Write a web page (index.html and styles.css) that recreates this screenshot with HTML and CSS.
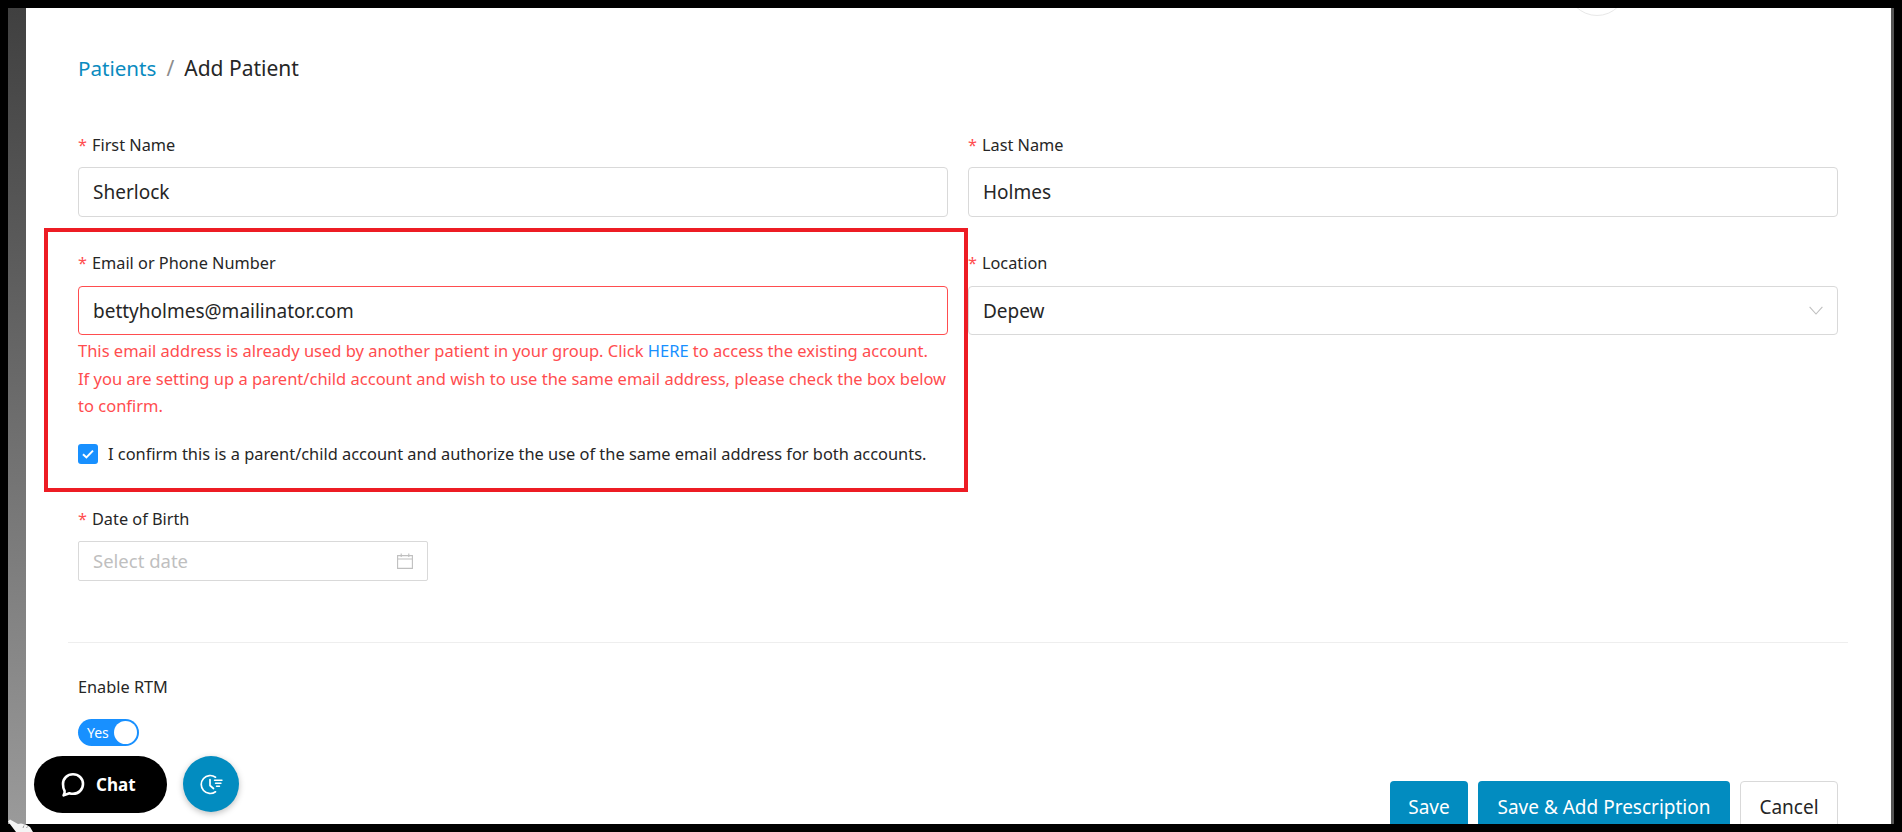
FILE: index.html
```html
<!DOCTYPE html>
<html lang="en">
<head>
<meta charset="utf-8">
<title>Add Patient</title>
<link rel="stylesheet" href="styles.css">
</head>
<body>
<div class="screen">
  <div class="strip-left"></div>
  <main class="page">
    <div class="avatar"></div>
    <nav class="crumbs"><a class="crumb-link">Patients</a><span class="crumb-sep">/</span><span class="crumb-current">Add Patient</span></nav>
    <form class="form-grid">
      <div class="field">
        <div class="label"><span class="star">*</span>First Name</div>
        <div class="input">Sherlock</div>
      </div>
      <div class="field">
        <div class="label"><span class="star">*</span>Last Name</div>
        <div class="input">Holmes</div>
      </div>
      <div class="field field-email">
        <div class="label"><span class="star">*</span>Email or Phone Number</div>
        <div class="input input-error">bettyholmes@mailinator.com</div>
        <div class="error">This email address is already used by another patient in your group. Click <a class="error-link">HERE</a> to access the existing account.<br>If you are setting up a parent/child account and wish to use the same email address, please check the box below to confirm.</div>
        <label class="confirm">
          <span class="checkbox"><svg width="14" height="12" viewBox="0 0 14 12"><path d="M2 6.200 5.400 9.400 12 2.600" fill="none" stroke="#fff" stroke-width="2"/></svg></span>
          <span class="confirm-text">I confirm this is a parent/child account and authorize the use of the same email address for both accounts.</span>
        </label>
        <div class="highlight"></div>
      </div>
      <div class="field field-location">
        <div class="label"><span class="star">*</span>Location</div>
        <div class="input input-select">Depew
          <svg class="chevron" width="14" height="9" viewBox="0 0 14 9"><path d="M.6.8 7 8 13.400.8" fill="none" stroke="#bfbfbf" stroke-width="1.100"/></svg>
        </div>
      </div>
    </form>
    <div class="field field-date">
      <div class="label"><span class="star">*</span>Date of Birth</div>
      <div class="date-input"><span class="placeholder">Select date</span>
        <svg width="16" height="16" viewBox="0 0 16 16"><path d="M.6 2.600h14.800v12.800H.6zM.6 6h14.800M4.200.6v3.400M11.800.6v3.400" fill="none" stroke="#bfbfbf" stroke-width="1.100"/></svg>
      </div>
    </div>
    <hr class="divider">
    <div class="rtm-label">Enable RTM</div>
    <div class="switch"><span class="switch-text">Yes</span><span class="switch-knob"></span></div>
    <div class="actions">
      <button type="button" class="btn btn-primary btn-save">Save</button>
      <button type="button" class="btn btn-primary btn-presc">Save &amp; Add Prescription</button>
      <button type="button" class="btn btn-cancel">Cancel</button>
    </div>
    <div class="chat">
      <svg width="24" height="26" viewBox="0 0 24 26"><path d="M12 2.200c5.600 0 10 4.200 10 9.800s-4.400 9.800-10 9.800c-1.400 0-2.500-.2-3.600-.6L2.600 23.400c.9-1.800 1.300-3.200 1-4.400C2.500 17.200 2 14.600 2 12 2 6.400 6.400 2.200 12 2.200z" fill="none" stroke="#fff" stroke-width="2.600" stroke-linejoin="round"/></svg>
      <span class="chat-text">Chat</span>
    </div>
    <div class="history">
      <svg width="24" height="24" viewBox="0 0 24 24"><path d="M16.500 19.800A9 9 0 1 1 16.500 5.200" fill="none" stroke="#fff" stroke-width="1.700" stroke-linecap="round"/><path d="M11 7.500v6l3.500 3" fill="none" stroke="#fff" stroke-width="1.700" stroke-linecap="round" stroke-linejoin="round"/><path d="M15.500 8.200h7.500M16.500 11.200h5.500M17.500 14.200h3" stroke="#fff" stroke-width="1.400" stroke-linecap="round"/></svg>
    </div>
  </main>
  <div class="strip-right"></div>
  <svg class="cursor" width="26" height="13" viewBox="0 0 26 13"><path d="M0 2.500 2 .5l8 4.500 3-.5 2 .5 3 .5 4 2.500 3 5H8z" fill="#f4f4f4"/><path d="M15 9l1-2.500M18.500 9l1-1.500" stroke="#999" stroke-width="1"/></svg>
</div>
</body>
</html>
```
FILE: styles.css
```css
* { box-sizing: border-box; }
html, body { margin: 0; height: 100%; overflow: hidden; background: #000; }
body { font-family: "Noto Sans", "Open Sans", sans-serif; font-size: 16.300px; color: #262626; }
.screen { position: relative; width: 1902px; height: 832px; background: #000; padding: 8px; display: flex; }
.strip-left { width: 18px; background: linear-gradient(#404040, #9a9a9a); }
.strip-right { width: 3px; background: #555; }
.page { position: relative; flex: 1; background: #fff; overflow: hidden; padding: 46px 53px 0 52px; }
.avatar { position: absolute; left: 1541px; top: -52px; width: 60px; height: 60px; border: 1px solid #e8e8e8; border-radius: 50%; }
.crumbs { height: 28px; line-height: 28px; font-size: 21px; display: flex; }
.crumb-link { color: #0a8bc0; font-size: 20.600px; }
.crumb-sep { color: #8c8c8c; margin: 0 10px; }
.crumb-current { color: #262626; }
.form-grid { display: grid; grid-template-columns: 870px 870px; column-gap: 20px; row-gap: 34px; margin-top: 51px; align-items: start; }
.label { height: 24px; line-height: 24px; white-space: nowrap; }
.star { color: #ff4d4f; margin-right: 5px; }
.input { height: 50px; margin-top: 10px; border: 1px solid #d9d9d9; border-radius: 4px; padding: 0 14px; line-height: 49px; font-size: 19px; position: relative; }
.field-email .input, .field-location .input { margin-top: 11px; height: 49px; line-height: 49px; }
.field-email { position: relative; }
.input-error { border-color: #ff4d4f; }
.chevron { position: absolute; right: 14px; top: 19px; }
.error { color: #ff4d4f; font-size: 16.500px; line-height: 27.500px; padding-top: 2px; }
.error-link { color: #1890ff; }
.confirm { display: flex; align-items: center; gap: 10px; margin-top: 20px; height: 28px; font-size: 16.400px; }
.checkbox { width: 20px; height: 20px; background: #1890ff; border-radius: 3px; display: flex; align-items: center; justify-content: center; }
.confirm-text { white-space: nowrap; }
.highlight { position: absolute; left: -34px; top: -23px; width: 924px; height: 264px; border: 4px solid #ed1c24; pointer-events: none; }
.field-date { margin-top: 39px; }
.date-input { width: 350px; height: 40px; margin-top: 10px; border: 1px solid #d9d9d9; border-radius: 2px; padding: 0 14px; display: flex; align-items: center; justify-content: space-between; }
.placeholder { color: #bfbfbf; font-size: 18.500px; }
.divider { border: 0; border-top: 1px solid #eee; margin: 61px -10px 0; }
.rtm-label { height: 24px; line-height: 24px; margin-top: 32px; }
.switch { margin-top: 20px; width: 61px; height: 27px; background: #1890ff; border-radius: 14px; position: relative; color: #fff; font-size: 14px; line-height: 27px; padding-left: 9px; }
.switch-knob { position: absolute; right: 2px; top: 2px; width: 23px; height: 23px; border-radius: 50%; background: #fff; }
.actions { display: flex; justify-content: flex-end; gap: 10px; margin-top: 35px; }
.btn { height: 52px; font-family: inherit; font-size: 19px; border-radius: 4px; border: 1px solid transparent; padding: 0; }
.btn-primary { background: #028cc0; color: #fff; }
.btn-save { width: 78px; }
.btn-presc { width: 252px; }
.btn-cancel { width: 98px; background: #fff; border-color: #d9d9d9; color: #262626; }
.chat { position: absolute; left: 8px; top: 748px; width: 133px; height: 57px; border-radius: 29px; background: #000; color: #fff; display: flex; align-items: center; padding-left: 27px; gap: 11px; }
.chat-text { font-weight: 700; font-size: 17px; }
.history { position: absolute; left: 157px; top: 748px; width: 56px; height: 56px; border-radius: 50%; background: #028cc0; box-shadow: 0 2px 6px rgba(0,0,0,.25); display: flex; align-items: center; justify-content: center; }
.cursor { position: absolute; left: 8px; top: 819px; }
```
